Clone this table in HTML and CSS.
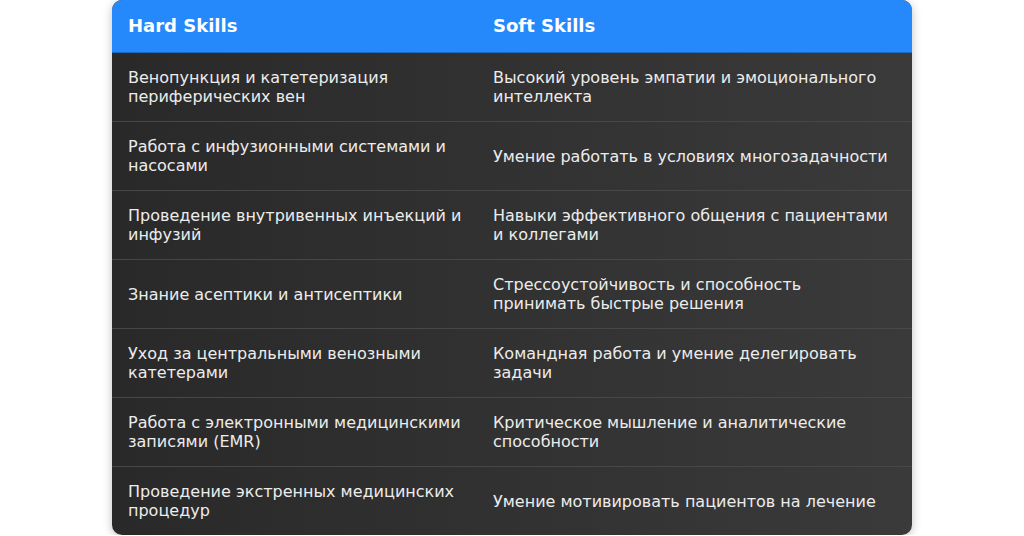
FILE: index.html
```html
<!DOCTYPE html>
<html lang="ru">
<head>
<meta charset="utf-8">
<link rel="stylesheet" href="styles.css">
</head>
<body>
<div class="table">
  <div class="row head">
    <div class="cell">Hard Skills</div>
    <div class="cell">Soft Skills</div>
  </div>
  <div class="row">
    <div class="cell">Венопункция и катетеризация периферических вен</div>
    <div class="cell">Высокий уровень эмпатии и эмоционального интеллекта</div>
  </div>
  <div class="row">
    <div class="cell">Работа с инфузионными системами и насосами</div>
    <div class="cell">Умение работать в условиях многозадачности</div>
  </div>
  <div class="row">
    <div class="cell">Проведение внутривенных инъекций и инфузий</div>
    <div class="cell">Навыки эффективного общения с пациентами и коллегами</div>
  </div>
  <div class="row">
    <div class="cell">Знание асептики и антисептики</div>
    <div class="cell">Стрессоустойчивость и способность принимать быстрые решения</div>
  </div>
  <div class="row">
    <div class="cell">Уход за центральными венозными катетерами</div>
    <div class="cell">Командная работа и умение делегировать задачи</div>
  </div>
  <div class="row">
    <div class="cell">Работа с электронными медицинскими записями (EMR)</div>
    <div class="cell">Критическое мышление и аналитические способности</div>
  </div>
  <div class="row last">
    <div class="cell">Проведение экстренных медицинских процедур</div>
    <div class="cell">Умение мотивировать пациентов на лечение</div>
  </div>
</div>
</body>
</html>
```
FILE: styles.css
```css
html, body {
  margin: 0;
  padding: 0;
  background: #ffffff;
}
body {
  font-family: "DejaVu Sans", sans-serif;
  display: flex;
  justify-content: center;
}
.table {
  width: 800px;
  border-radius: 10px;
  overflow: hidden;
  background: linear-gradient(90deg, #292929 0%, #3a3a3a 100%);
  box-shadow: 0 2px 10px rgba(0, 0, 0, 0.25);
}
.row {
  display: grid;
  grid-template-columns: 365px 1fr;
  border-bottom: 1px solid #474747;
}
.row.last {
  border-bottom: none;
}
.cell {
  padding: 15px 12px 15px 16px;
  font-size: 16px;
  line-height: 19px;
  color: #ececec;
  min-height: 38px;
  display: flex;
  align-items: center;
}
.cell:last-child {
  padding-right: 16px;
}
.head {
  background: #2589fb;
  border-bottom: 1px solid #1c6ac4;
}
.head .cell {
  min-height: 0;
  font-weight: bold;
  font-size: 18px;
  line-height: 22px;
  color: #ffffff;
  padding-top: 15px;
  padding-bottom: 15px;
}
```
